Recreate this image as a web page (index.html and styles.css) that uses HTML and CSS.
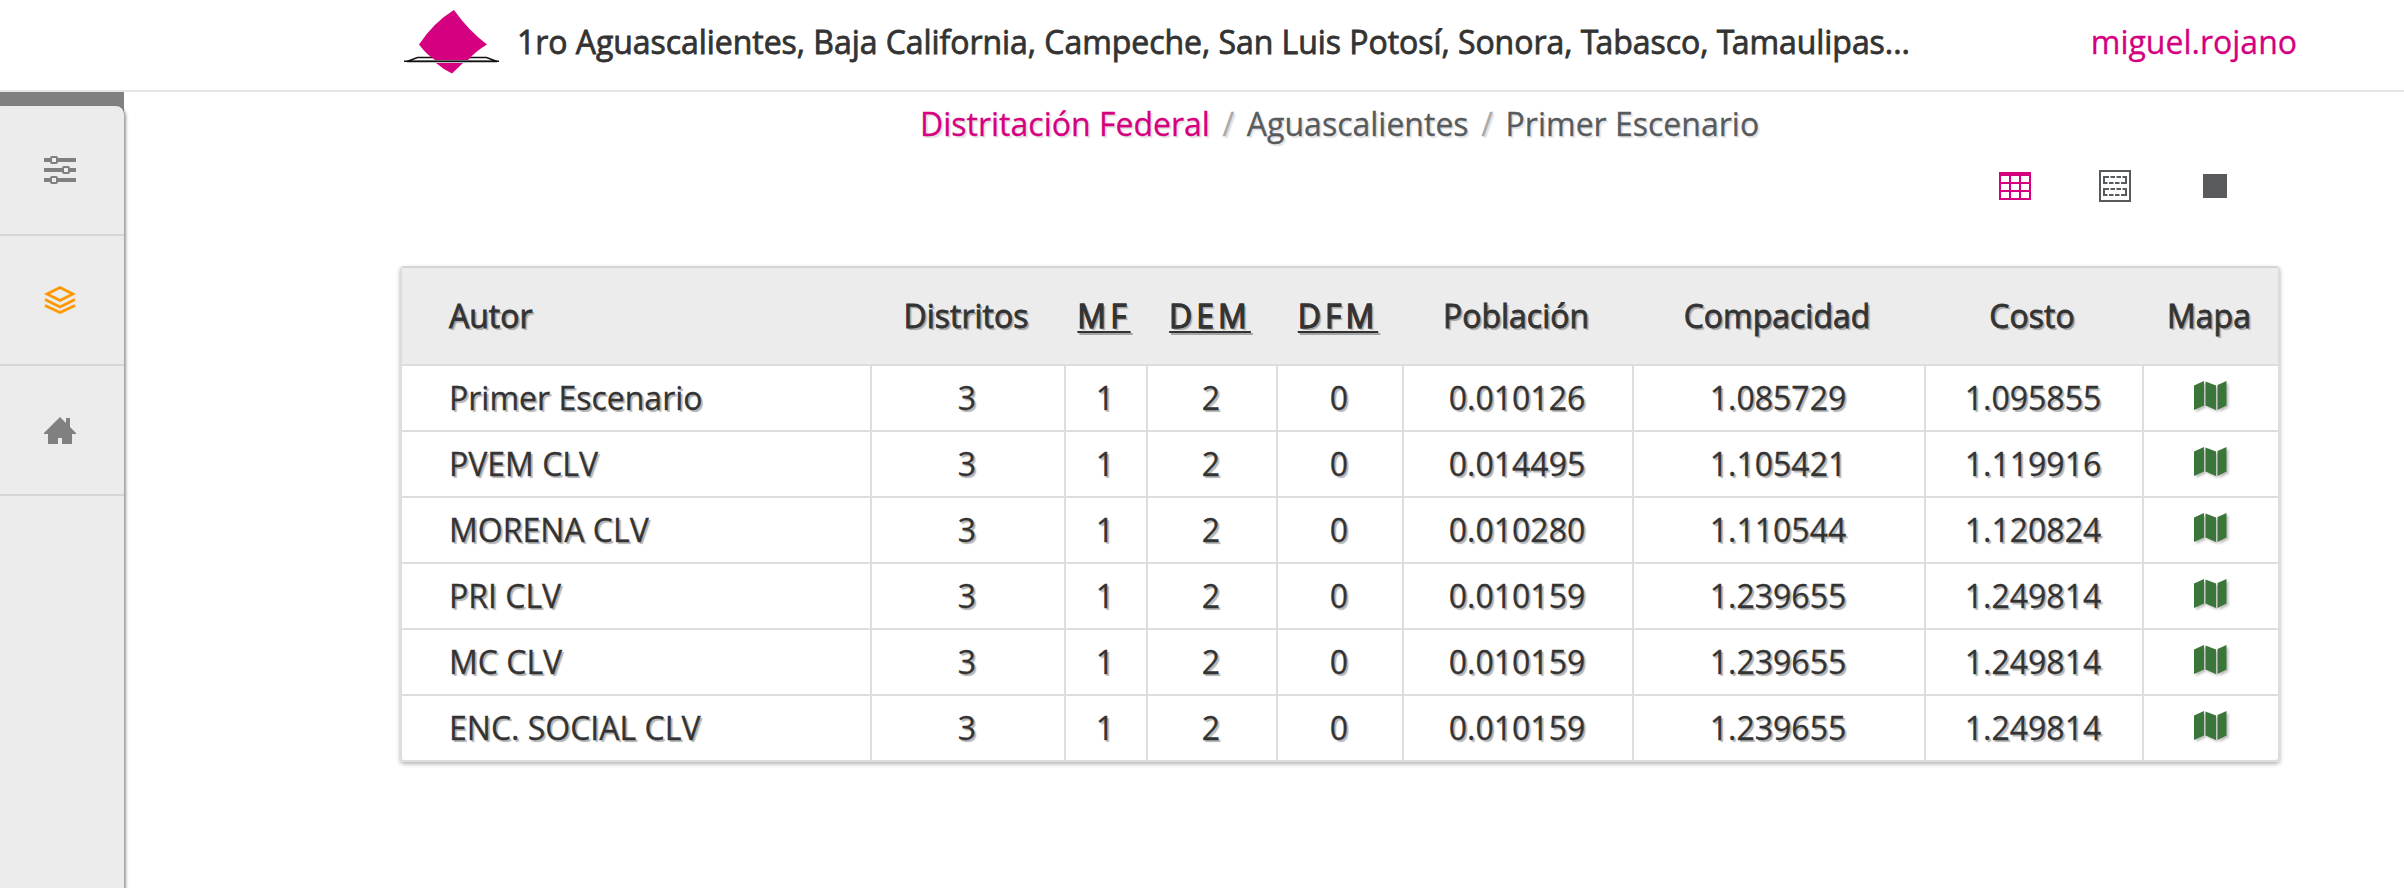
FILE: index.html
```html
<!DOCTYPE html>
<html lang="es">
<head>
<meta charset="utf-8">
<title>Distritación Federal</title>
<link rel="stylesheet" href="styles.css">
</head>
<body>
<svg class="defs" aria-hidden="true">
  <symbol id="map" viewBox="0 0 33 30">
    <path d="M0 4.500 10 0v24.500L0 29zM11.500 .5l10.500 4V29l-10.500-4.500zM23.500 4 32.500 0v24.500l-9 4.500z"/>
  </symbol>
</svg>
<header class="topbar">
  <svg class="logo" viewBox="0 0 96 64">
    <path class="slot" d="M13.500 47.500h69l10.500 4h-90z"/>
    <path class="ballot" d="M50 0Q30 12 15 34.500 22 44 31 50h33Q72 41 83 34.500 64 20 50 0z"/>
    <path class="ballot" d="M32 53h27L48 63.500Q40 60 32 53z"/>
    <path class="edge" d="M0 51.200h95"/>
  </svg>
  <h1 class="title">1ro Aguascalientes, Baja California, Campeche, San Luis Potosí, Sonora, <span class="kern">T</span>abasco, <span class="kern">T</span>amaulipas...</h1>
  <a class="user">miguel.rojano</a>
</header>
<div class="body">
  <aside class="rail">
    <nav class="menu">
      <a class="item"><svg class="glyph" viewBox="0 0 32 32"><path class="bars" d="M0 6h32M0 16h32M0 26h32"/><g class="knobs"><rect x="7" y="3" width="6" height="6" rx="1"/><rect x="19" y="13" width="6" height="6" rx="1"/><rect x="7" y="23" width="6" height="6" rx="1"/></g></svg></a>
      <a class="item"><svg class="glyph layers" viewBox="0 0 32 32"><path d="M3 10 16 3.500 29 10 16 16.500zM1 15.500 16 23l15-7.500M1 21.500 16 28.500l15-7"/></svg></a>
      <a class="item"><svg class="glyph home" viewBox="0 0 32 32"><path d="M16 3 22 9V4h4v9l6 6v1h-4v10H18v-6h-4v6H4V20H0v-1z"/></svg></a>
    </nav>
  </aside>
  <main class="main">
    <nav class="crumbs"><a class="current">Distritación Federal</a><i class="sep">/</i><span>Aguascalientes</span><i class="sep">/</i><span>Primer Escenario</span></nav>
    <div class="tools">
      <svg class="tool table-tool" viewBox="0 0 32 32"><path d="M1 3h30v26H1zM1 5h30M1 13h30M1 21h30M11 4v26M21 4v26"/></svg>
      <svg class="tool" viewBox="0 0 32 32"><path class="frame" d="M1 1h30v30H1z"/><path class="dash" d="M10 7H5v6h3.500M11.500 7h4.500M17.500 7h4.500M23.500 7H27v6h-5M10 13h4.500M16 13h4.500M10 19H5v6h3.500M11.500 19h4.500M17.500 19h4.500M23.500 19H27v6h-5M10 25h4.500M16 25h4.500"/></svg>
      <svg class="tool" viewBox="0 0 32 32"><path class="block" d="M4 4h24v24H4z"/></svg>
    </div>
    <table class="results">
      <colgroup><col class="c1"><col class="c2"><col class="c3"><col class="c4"><col class="c5"><col class="c6"><col class="c7"><col class="c8"><col class="c9"></colgroup>
      <thead><tr><th>Autor</th><th>Distritos</th><th><u>MF</u></th><th><u>DEM</u></th><th><u>DFM</u></th><th>Población</th><th>Compacidad</th><th>Costo</th><th>Mapa</th></tr></thead>
      <tbody>
        <tr><td>Primer Escenario</td><td>3</td><td>1</td><td>2</td><td>0</td><td>0.010126</td><td>1.085729</td><td>1.095855</td><td><svg class="map"><use href="#map"/></svg></td></tr>
        <tr><td>PVEM CLV</td><td>3</td><td>1</td><td>2</td><td>0</td><td>0.014495</td><td>1.105421</td><td>1.119916</td><td><svg class="map"><use href="#map"/></svg></td></tr>
        <tr><td>MORENA CLV</td><td>3</td><td>1</td><td>2</td><td>0</td><td>0.010280</td><td>1.110544</td><td>1.120824</td><td><svg class="map"><use href="#map"/></svg></td></tr>
        <tr><td>PRI CLV</td><td>3</td><td>1</td><td>2</td><td>0</td><td>0.010159</td><td>1.239655</td><td>1.249814</td><td><svg class="map"><use href="#map"/></svg></td></tr>
        <tr><td>MC CLV</td><td>3</td><td>1</td><td>2</td><td>0</td><td>0.010159</td><td>1.239655</td><td>1.249814</td><td><svg class="map"><use href="#map"/></svg></td></tr>
        <tr><td>ENC. SOCIAL CLV</td><td>3</td><td>1</td><td>2</td><td>0</td><td>0.010159</td><td>1.239655</td><td>1.249814</td><td><svg class="map"><use href="#map"/></svg></td></tr>
      </tbody>
    </table>
  </main>
</div>
</body>
</html>
```

FILE: styles.css
```css
* { box-sizing: border-box; }
body { margin: 0; height: 888px; overflow: hidden; background: #fff; color: #333; font: 400 32px/44px "Open Sans", sans-serif; display: flex; flex-direction: column; }
.defs { display: none; }
.topbar { height: 92px; flex: none; border-bottom: 2px solid #e5e5e5; padding: 0 107px 6px 404px; display: flex; align-items: center; }
.logo { width: 96px; height: 64px; flex: none; margin-right: 17px; }
.slot { fill: #fff; stroke: #111; stroke-width: 1.500; }
.ballot { fill: #d5007f; }
.edge { stroke: #111; stroke-width: 1.600; }
.title { margin: 0; font-size: 32px; font-weight: 400; line-height: 44px; white-space: nowrap; letter-spacing: -.05px; -webkit-text-stroke: .8px #333; }
.kern { letter-spacing: -2.700px; }
.user { margin-left: auto; color: #d5007f; -webkit-text-stroke: .3px #d5007f; }
.body { flex: 1; display: flex; min-height: 0; }
.rail { width: 124px; flex: none; background: linear-gradient(#808080 40px, #ececec 40px); padding-top: 14px; }
.menu { height: 100%; background: #ececec; border-top-right-radius: 8px; box-shadow: 2px 2px 3px rgba(0,0,0,.4); }
.item { height: 130px; border-bottom: 2px solid #d6d6d6; display: flex; align-items: center; padding-left: 44px; }
.glyph { width: 32px; height: 32px; fill: #808080; }
.bars { stroke: #808080; stroke-width: 4; }
.knobs { fill: #ececec; stroke: #808080; stroke-width: 2; }
.layers { fill: none; stroke: #ff9800; stroke-width: 2.900; }
.main { flex: 1; padding: 10px 124px 0 276px; }
.crumbs { display: flex; padding-left: 520px; color: #575b5e; text-shadow: 2px 2px 1px rgba(0,0,0,.12); -webkit-text-stroke: .3px; }
.current { color: #d5007f; }
.sep { width: 37px; text-align: center; font-style: normal; color: #aaa; }
.tools { display: flex; justify-content: flex-end; gap: 68px; padding: 24px 49px 0 0; }
.tool { width: 32px; height: 32px; fill: none; stroke: #575b5e; stroke-width: 2; }
.table-tool { stroke: #d5007f; }
.frame { stroke-width: 2; }
.block { fill: #575b5e; stroke: none; }
.results { width: 1880px; margin-top: 64px; table-layout: fixed; border-collapse: separate; border-spacing: 0; border: 2px solid #ddd; border-top-color: #d4d4d4; border-radius: 4px; box-shadow: 0 2px 4px rgba(0,0,0,.3); text-shadow: 2px 2px 1px rgba(0,0,0,.3); overflow: hidden; }
.c1 { width: 470px; } .c2 { width: 194px; } .c3 { width: 82px; } .c4 { width: 130px; } .c5 { width: 126px; } .c6 { width: 230px; } .c7 { width: 292px; } .c8 { width: 218px; } .c9 { width: 134px; }
th, td { text-align: center; white-space: nowrap; }
th { height: 98px; padding: 0 6px 0 0; background: #ececec; border-bottom: 2px solid #ddd; font-weight: 400; -webkit-text-stroke: .8px #333; }
td { height: 66px; padding: 0 2px 0 0; border-right: 2px solid #ddd; border-bottom: 2px solid #ddd; -webkit-text-stroke: .3px #333; }
td:last-child { border-right: 0; }
th:last-child { padding-right: 4px; }
tbody tr:last-child td { height: 64px; border-bottom: 0; }
th:first-child, td:first-child { text-align: left; padding-left: 47px; }
u { letter-spacing: 4px; text-decoration-thickness: 2px; text-underline-offset: 3px; }
.map { display: block; width: 33px; height: 30px; margin: -4px auto 0; fill: #3a753a; filter: drop-shadow(2px 2px 1px rgba(0,0,0,.25)); }
```
